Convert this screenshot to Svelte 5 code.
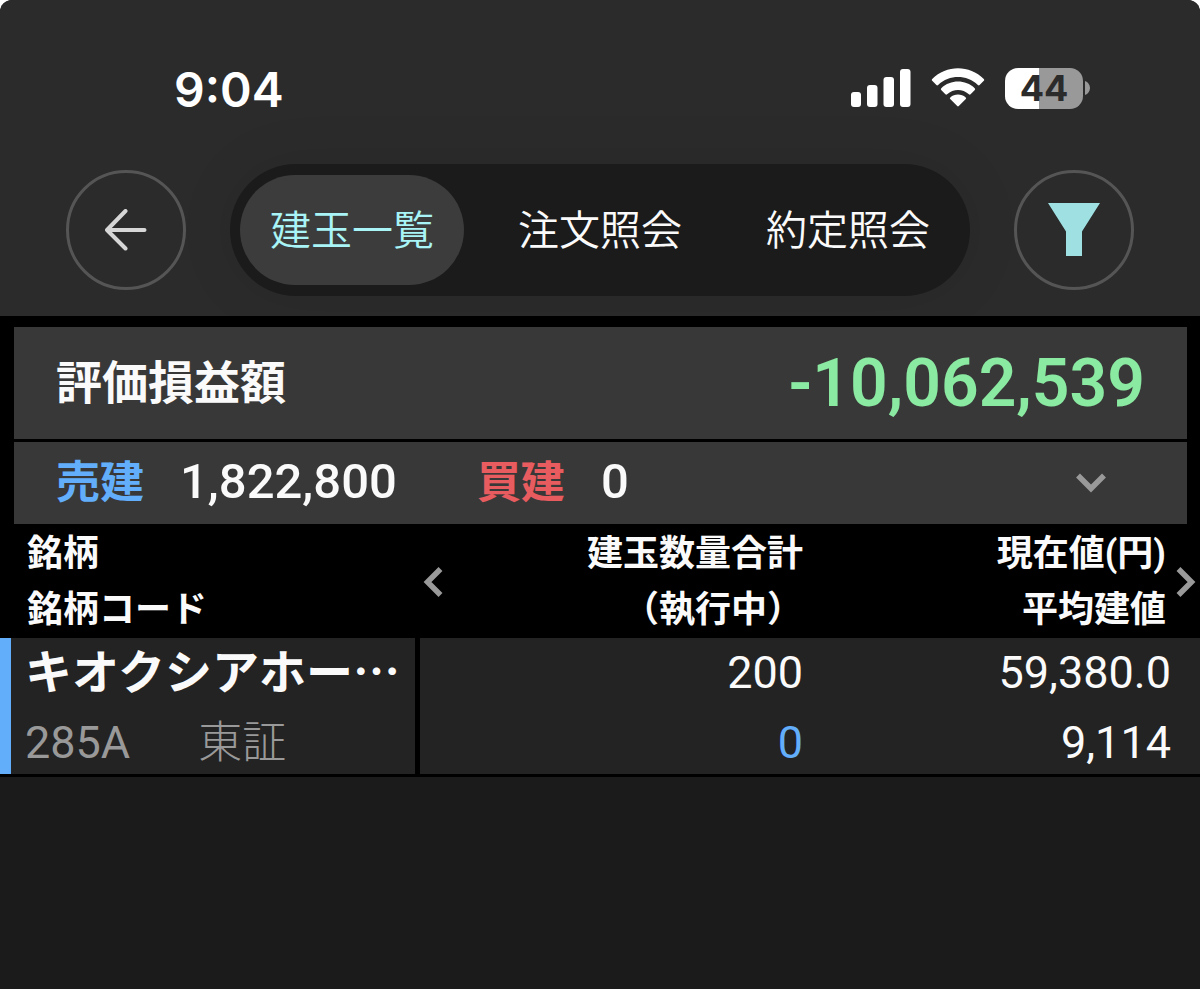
<script>
  const tabs = ['建玉一覧', '注文照会', '約定照会'];
  let activeTab = $state(0);

  const battery = 44;

  const positions = [
    {
      name: 'キオクシアホー…',
      code: '285A',
      market: '東証',
      quantity: '200',
      pending: '0',
      price: '59,380.0',
      average: '9,114'
    }
  ];
</script>

<div class="screen" lang="ja">
  <header>
    <div class="status-bar">
      <time>9:04</time>
      <div class="indicators">
        <svg width="60" height="38" viewBox="0 0 60 38" fill="#fff" aria-hidden="true">
          <rect x="0" y="23" width="10" height="15" rx="3" />
          <rect x="16" y="16" width="10.5" height="22" rx="3" />
          <rect x="32.5" y="8" width="10.5" height="30" rx="3" />
          <rect x="49" y="0" width="10.5" height="38" rx="3" />
        </svg>
        <svg width="54" height="40" viewBox="0 0 54 40" fill="#fff" aria-hidden="true">
          <path d="M1.2 12.8 Q0.4 12 1.2 11.1 C15.4-3.4 38.6-3.4 52.8 11.1 Q53.6 12 52.8 12.8 L48.6 17 Q47.8 17.8 46.9 17 C35.6 6.4 18.4 6.4 7.1 17 Q6.2 17.8 5.4 17 Z" />
          <path d="M10.2 21.9 Q9.4 21.1 10.3 20.2 C19.6 11.3 34.4 11.3 43.7 20.2 Q44.6 21.1 43.8 21.9 L39.6 26.2 Q38.8 27 37.9 26.3 C31.6 20.6 22.4 20.6 16.1 26.3 Q15.2 27 14.4 26.2 Z" />
          <path d="M19.2 31 Q18.4 30.2 19.3 29.4 C23.7 25.6 30.3 25.6 34.7 29.4 Q35.6 30.2 34.8 31 L27.8 38.1 Q27 38.9 26.2 38.1 Z" />
        </svg>
        <div class="battery">
          <span class="cell" style="--level: {battery}%">{battery}</span>
          <svg width="5" height="14" viewBox="0 0 5 14" fill="#999" aria-hidden="true">
            <path d="M0 0 C3 1 5 4 5 7 S3 13 0 14 Z" />
          </svg>
        </div>
      </div>
    </div>

    <div class="toolbar">
      <button class="round" aria-label="戻る">
        <svg width="42" height="42" viewBox="0 0 42 42" fill="none" stroke="#d6d6d6" stroke-width="4" stroke-linecap="round" stroke-linejoin="round">
          <path d="M20.5 2 L2 21 L20.5 39.5 M2 21 H39.5" />
        </svg>
      </button>

      <nav class="tabs">
        {#each tabs as tab, i}
          <button class="tab" class:active={activeTab === i} onclick={() => (activeTab = i)}>{tab}</button>
        {/each}
      </nav>

      <button class="round" aria-label="絞り込み">
        <svg width="52" height="54" viewBox="0 0 52 54" fill="#9fe0e3">
          <path d="M0 0 H52 L34 28.5 V53 H18 V28.5 Z" />
        </svg>
      </button>
    </div>
  </header>

  <section class="summary">
    <div class="total">
      <h1>評価損益額</h1>
      <strong>-10,062,539</strong>
    </div>
    <div class="breakdown">
      <span class="side sell">売建</span>
      <span class="amount">1,822,800</span>
      <span class="side buy">買建</span>
      <span class="amount">0</span>
      <button class="expand" aria-label="詳細を開く">
        <svg width="30" height="20" viewBox="0 0 30 20" fill="none" stroke="#999" stroke-width="5.5">
          <path d="M2 2.5 L15 15.5 L28 2.5" />
        </svg>
      </button>
    </div>
  </section>

  <table>
    <thead>
      <tr>
        <th class="issue">銘柄<br />銘柄コード</th>
        <th class="quantity">
          <div class="scroll-head">
            <button aria-label="前の列">
              <svg width="20" height="30" viewBox="0 0 20 30" fill="none" stroke="#999" stroke-width="5.5">
                <path d="M17.5 2 L4.5 15 L17.5 28" />
              </svg>
            </button>
            <span>建玉数量合計<br />（執行中）</span>
          </div>
        </th>
        <th class="price">
          <div class="scroll-head">
            <span>現在値(円)<br />平均建値</span>
            <button aria-label="次の列">
              <svg width="20" height="30" viewBox="0 0 20 30" fill="none" stroke="#999" stroke-width="5.5">
                <path d="M2.5 2 L15.5 15 L2.5 28" />
              </svg>
            </button>
          </div>
        </th>
      </tr>
    </thead>
    <tbody>
      {#each positions as p}
        <tr>
          <td class="issue">
            <div class="pair">
              <span class="name">{p.name}</span>
              <span class="code"><span>{p.code}</span><span class="market">{p.market}</span></span>
            </div>
          </td>
          <td class="quantity">
            <div class="pair">
              <span>{p.quantity}</span>
              <span class="pending">{p.pending}</span>
            </div>
          </td>
          <td class="price">
            <div class="pair">
              <span>{p.price}</span>
              <span>{p.average}</span>
            </div>
          </td>
        </tr>
      {/each}
    </tbody>
  </table>
</div>

<style>
  :global(body) {
    background: #fff;
  }

  .screen {
    min-height: 100vh;
    background: #1b1b1b;
    border-radius: 12px 12px 0 0;
    overflow: hidden;
    color: #fafafa;
    font-family: Roboto, 'Noto Sans CJK JP', sans-serif;
  }

  button {
    margin: 0;
    padding: 0;
    border: none;
    background: none;
    color: inherit;
    font: inherit;
    cursor: pointer;
  }

  svg {
    display: block;
  }

  header {
    background: #2b2b2b;
    padding: 56px 66px 20px;
  }

  .status-bar {
    display: flex;
    justify-content: space-between;
    align-items: center;
    height: 64px;
    padding: 0 44px 0 108px;
    margin-bottom: 44px;
    color: #fff;
    font-family: Inter, sans-serif;
  }

  time {
    padding-top: 4px;
    font-size: 48px;
    font-weight: 600;
    line-height: 60px;
  }

  .indicators {
    display: flex;
    align-items: center;
    gap: 20px;
  }

  .battery {
    display: flex;
    align-items: center;
    gap: 2px;
  }

  .cell {
    width: 78px;
    border-radius: 13px;
    background: linear-gradient(to right, #fff var(--level), #999 var(--level));
    color: #2b2b2b;
    font-size: 36px;
    font-weight: 700;
    line-height: 41px;
    text-align: center;
  }

  .toolbar {
    display: flex;
    align-items: center;
    gap: 44px;
  }

  .round {
    flex: none;
    display: flex;
    align-items: center;
    justify-content: center;
    width: 120px;
    height: 120px;
    border: 3px solid #555;
    border-radius: 50%;
  }

  .tabs {
    flex: 1;
    display: flex;
    gap: 24px;
    padding: 11px 10px;
    border-radius: 66px;
    background: #1b1b1b;
    box-shadow: 0 0 60px rgba(0, 0, 0, 0.08);
  }

  .tab {
    flex: 1;
    height: 110px;
    padding-bottom: 6px;
    border-radius: 55px;
    font-family: 'Noto Sans CJK JP', sans-serif;
    font-size: 41px;
    font-weight: 350;
    white-space: nowrap;
  }

  .tab.active {
    background: #3c3c3c;
    color: #a8f4f6;
  }

  .summary {
    display: flex;
    flex-direction: column;
    gap: 3px;
    padding: 11px 13px 0 14px;
    background: #000;
  }

  .total,
  .breakdown {
    display: flex;
    align-items: center;
    padding: 0 42px;
    background: #383838;
  }

  .total {
    justify-content: space-between;
    height: 112px;
  }

  h1 {
    margin: 0;
    padding-bottom: 8px;
    font-size: 46px;
    font-weight: 700;
  }

  strong {
    color: #8beaa2;
    font-size: 66px;
    font-weight: 600;
  }

  .breakdown {
    height: 82px;
  }

  .side {
    padding-bottom: 8px;
    font-size: 44px;
    font-weight: 700;
    margin-right: 36px;
  }

  .sell {
    color: #63aefb;
  }

  .buy {
    color: #e85c60;
  }

  .amount {
    padding-bottom: 4px;
    font-size: 49px;
    font-weight: 500;
    margin-right: 80px;
  }

  .expand {
    margin: 0 39px 0 auto;
  }

  table {
    width: 100%;
    table-layout: fixed;
    border-spacing: 0;
    border-bottom: 3px solid #000;
  }

  th,
  td {
    padding: 0;
    text-align: right;
  }

  thead {
    background: #000;
  }

  th {
    padding: 2px 0 0;
    font-size: 36px;
    font-weight: 700;
    line-height: 56px;
    white-space: nowrap;
  }

  th.issue {
    width: 35%;
    padding-left: 27px;
    box-sizing: border-box;
    text-align: left;
  }

  th.quantity {
    width: 33%;
    padding-left: 3px;
    padding-right: 13px;
    box-sizing: border-box;
  }

  th.price {
    padding-right: 4px;
  }

  .scroll-head {
    display: flex;
    align-items: center;
    justify-content: space-between;
  }

  .price .scroll-head {
    justify-content: flex-end;
    gap: 10px;
  }

  td {
    background: #232323;
    font-size: 45px;
  }

  td.issue {
    border-left: 11px solid #63aefb;
    border-right: 5px solid #000;
    padding-left: 14px;
    text-align: left;
  }

  td.quantity {
    padding-right: 13px;
  }

  td.price {
    padding-right: 29px;
  }

  .pair {
    display: flex;
    flex-direction: column;
    gap: 8px;
    padding-top: 4px;
    line-height: 62px;
    white-space: nowrap;
  }

  .name {
    font-family: 'Noto Sans CJK JP', sans-serif;
    font-size: 47px;
    font-weight: 700;
    line-height: 54px;
  }

  .code {
    display: flex;
    gap: 68px;
    margin-top: 8px;
    color: #999;
  }

  .market {
    font-size: 44px;
    font-weight: 300;
  }

  .pending {
    color: #63aefb;
  }
</style>
